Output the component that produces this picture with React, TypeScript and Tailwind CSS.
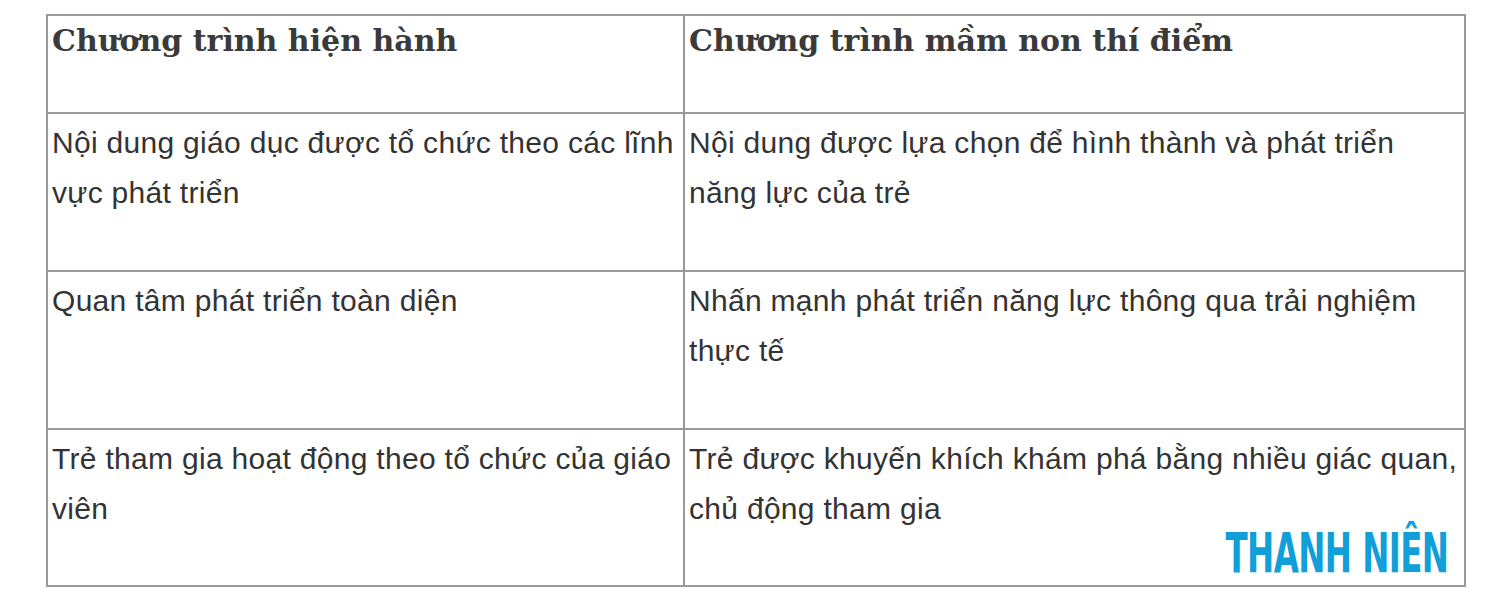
const rows = [
  {
    left: "Nội dung giáo dục được tổ chức theo các lĩnh vực phát triển",
    right: "Nội dung được lựa chọn để hình thành và phát triển năng lực của trẻ",
  },
  {
    left: "Quan tâm phát triển toàn diện",
    right: "Nhấn mạnh phát triển năng lực thông qua trải nghiệm thực tế",
  },
  {
    left: "Trẻ tham gia hoạt động theo tổ chức của giáo viên",
    right: "Trẻ được khuyến khích khám phá bằng nhiều giác quan, chủ động tham gia",
  },
]

export default function App() {
  return (
    <div className="min-h-[612px] bg-white pl-[46px] pt-[14px]">
      <div className="relative w-[1420px]">
        <div className="grid grid-cols-[635px_779px] grid-rows-[96px_156px_156px_155px] gap-[2px] bg-[#999] p-[2px]">
          <div className="bg-white px-[4px] pt-[2px] font-['DejaVu_Serif',serif] text-[30px] font-bold leading-[46px] text-[#3a3a3a]">
            Chương trình hiện hành
          </div>
          <div className="bg-white px-[4px] pt-[2px] font-['DejaVu_Serif',serif] text-[30px] font-bold leading-[46px] text-[#3a3a3a]">
            Chương trình mầm non thí điểm
          </div>
          {rows.map((r) => (
            <>
              <div key={r.left} className="bg-white px-[4px] pt-[4px] font-['Liberation_Sans',Arial,sans-serif] text-[30px] leading-[50px] tracking-[0.3px] text-[#333]">
                {r.left}
              </div>
              <div key={r.right} className="bg-white px-[4px] pt-[4px] font-['Liberation_Sans',Arial,sans-serif] text-[30px] leading-[50px] tracking-[0.3px] text-[#333]">
                {r.right}
              </div>
            </>
          ))}
        </div>
        <div className="absolute right-[18px] bottom-[6px] origin-right scale-x-[0.58] font-['DejaVu_Sans',sans-serif] text-[56px] font-black leading-none tracking-[-1px] text-[#119fd9]">
          THANH NIÊN
        </div>
      </div>
    </div>
  )
}
